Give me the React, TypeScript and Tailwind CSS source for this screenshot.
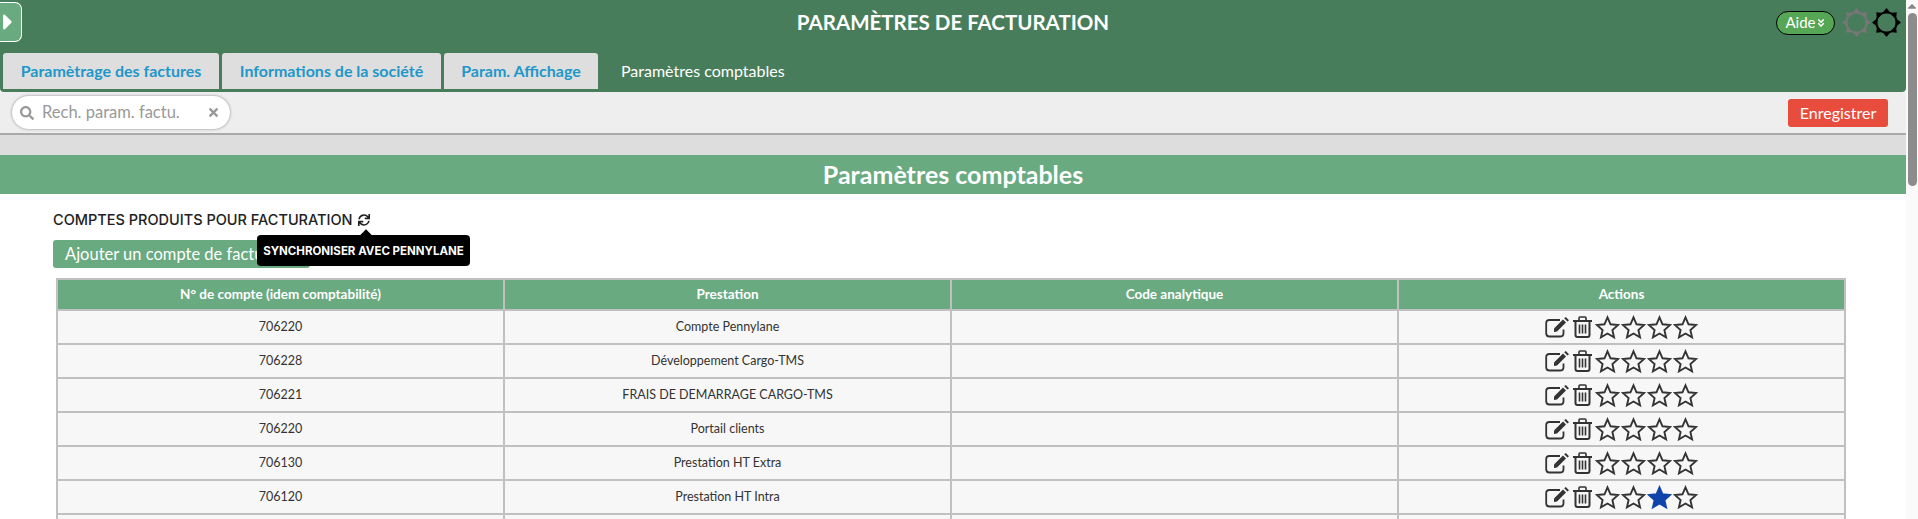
import { FaSearch, FaTimes, FaSync, FaAngleDoubleDown, FaCaretRight, FaCaretUp } from 'react-icons/fa';

const FONT = 'Lato, "Open Sans", sans-serif';

const rows = [
  { account: '706220', label: 'Compte Pennylane', star: -1 },
  { account: '706228', label: 'Développement Cargo-TMS', star: -1 },
  { account: '706221', label: 'FRAIS DE DEMARRAGE CARGO-TMS', star: -1 },
  { account: '706220', label: 'Portail clients', star: -1 },
  { account: '706130', label: 'Prestation HT Extra', star: -1 },
  { account: '706120', label: 'Prestation HT Intra', star: 2 },
  { account: '', label: '', star: -1 },
];

const STAR = 'M12 2.2 L14.9 8.9 L22.2 9.6 L16.7 14.4 L18.3 21.5 L12 17.8 L5.7 21.5 L7.3 14.4 L1.8 9.6 L9.1 8.9 Z';

function Gear({ className }: { className: string }) {
  const teeth = [0, 45, 90, 135, 180, 225, 270, 315];
  return (
    <svg viewBox="0 0 30 30" className={className} fill="currentColor">
      {teeth.map((a) => (
        <path key={a} d="M10.5 5.5 L15 0 L19.5 5.5 Z" transform={`rotate(${a} 15 15)`} />
      ))}
      <circle cx="15" cy="15" r="10.5" fill="none" stroke="currentColor" strokeWidth="2" />
    </svg>
  );
}

function EditIcon() {
  return (
    <svg viewBox="0 0 25 22" className="w-[25px] h-[22px] text-[#333333]" fill="none" stroke="currentColor">
      <path d="M15 4 H4.5 Q1.2 4 1.2 7.3 V17.2 Q1.2 20.5 4.5 20.5 H15 Q18.5 20.5 18.5 17.2 V13.5" strokeWidth="1.8" />
      <path d="M9 12.5 L18 3.5 L21 6.5 L12 15.5 L9 16 Z" fill="currentColor" stroke="none" />
      <path d="M19.2 2.3 L20.8 1 L24 4.2 L22.4 5.6 Z" fill="currentColor" stroke="none" />
    </svg>
  );
}

function TrashIcon() {
  return (
    <svg viewBox="0 0 19 22" className="w-[19px] h-[22px] text-[#333333]" fill="none" stroke="currentColor" strokeWidth="2">
      <path d="M0 5 H19" />
      <path d="M6 5 V2 Q6 1 7 1 H12 Q13 1 13 2 V5" strokeWidth="1.6" />
      <path d="M2.5 5 V19 Q2.5 21 4.5 21 H14.5 Q16.5 21 16.5 19 V5" />
      <path d="M6.5 8.5 V17.5 M9.5 8.5 V17.5 M12.5 8.5 V17.5" strokeWidth="1.6" />
    </svg>
  );
}

function Tab({ label, width }: { label: string; width: string }) {
  return (
    <div className={`${width} h-[36px] flex items-center justify-center bg-[#dedede] rounded-t-[3px] text-[#1f97c9] text-[16px] font-bold whitespace-nowrap`}>
      {label}
    </div>
  );
}

export default function App() {
  return (
    <div className="h-[519px] overflow-hidden flex bg-white" style={{ fontFamily: FONT }}>
      <div className="w-[1906px] shrink-0 flex flex-col">
        <header className="relative h-[92px] shrink-0 bg-[#487d5c] rounded-b-[4px] flex flex-col justify-end pb-[3px] pl-[3px]">
          <div className="absolute left-0 top-[2px] w-[22px] h-[40px] bg-[#69aa80] border border-white border-l-0 rounded-r-[7px] flex items-center">
            <FaCaretRight size={26} className="text-white -ml-[5px]" />
          </div>
          <h1 className="absolute left-0 right-0 top-[9px] text-center text-white text-[20.5px] font-bold leading-[26px]">
            PARAMÈTRES DE FACTURATION
          </h1>
          <div className="absolute right-[5px] top-[8px] flex items-center gap-[1px]">
            <div className="h-[24px] w-[59px] mr-[6px] rounded-full bg-[#55a755] border border-black text-white text-[15px] flex items-center justify-center">
              Aide
              <FaAngleDoubleDown size={10} />
            </div>
            <Gear className="w-[29px] h-[29px] text-[#777777]" />
            <Gear className="w-[29px] h-[29px] text-black" />
          </div>
          <nav className="flex gap-[3px]">
            <Tab label="Paramètrage des factures" width="w-[216px]" />
            <Tab label="Informations de la société" width="w-[219px]" />
            <Tab label="Param. Affichage" width="w-[154px]" />
            <div className="h-[36px] px-[20px] flex items-center text-white text-[16px] whitespace-nowrap">
              Paramètres comptables
            </div>
          </nav>
        </header>

        <div className="h-[43px] shrink-0 bg-[#eeeeee] border-b-2 border-[#aaaaaa] flex items-center justify-between pl-[12px] pr-[18px]">
          <div className="w-[218px] h-[33px] bg-white rounded-full shadow-[0_0_3px_#888888] flex items-center pl-[8px] pr-[10px] text-[#999999]">
            <FaSearch size={14} />
            <span className="ml-[8px] text-[16.5px] flex-1">Rech. param. factu.</span>
            <FaTimes size={13} />
          </div>
          <button className="w-[100px] h-[28px] bg-[#e74c3c] rounded-[3px] text-white text-[16px]">Enregistrer</button>
        </div>

        <div className="h-[20px] shrink-0 bg-[#dddddd]" />

        <div className="h-[39px] shrink-0 bg-[#69aa80] text-white text-[25px] font-bold flex items-center justify-center">
          Paramètres comptables
        </div>

        <main className="pl-[53px] pr-[60px]">
          <div className="relative mt-[16px] flex items-center text-[14.5px] font-medium text-[#222222] leading-[20px]" style={{ fontFamily: 'Inter, sans-serif' }}>
            COMPTES PRODUITS POUR FACTURATION
            <FaSync size={12} className="ml-[5px]" />
            <div className="absolute left-[204px] top-[25px] w-[213px] h-[31px] bg-black rounded-[4px] text-white text-[11.5px] font-bold flex items-center justify-center whitespace-nowrap z-10">
              SYNCHRONISER AVEC PENNYLANE
              <div className="absolute left-[105px] -top-[4px] w-[8px] h-[8px] bg-black rotate-45" />
            </div>
          </div>
          <button className="mt-[10px] w-[257px] h-[28px] bg-[#69aa80] rounded-[3px] text-white text-[16.5px] text-left pl-[12px] whitespace-nowrap">
            Ajouter un compte de facturation
          </button>
          <table className="ml-[3px] mt-[10px] w-[1790px] table-fixed border-collapse text-[12.5px] text-[#333333]">
            <thead>
              <tr className="h-[31px] bg-[#69aa80] text-white text-[13.5px]">
                <th className="border-2 border-[#c0c0c0] font-bold">N° de compte (idem comptabilité)</th>
                <th className="border-2 border-[#c0c0c0] font-bold">Prestation</th>
                <th className="border-2 border-[#c0c0c0] font-bold">Code analytique</th>
                <th className="border-2 border-[#c0c0c0] font-bold">Actions</th>
              </tr>
            </thead>
            <tbody>
              {rows.map((row, i) => (
                <tr key={i} className="h-[34px] bg-[#f7f7f7] text-center">
                  <td className="border-2 border-[#c0c0c0]">{row.account}</td>
                  <td className="border-2 border-[#c0c0c0]">{row.label}</td>
                  <td className="border-2 border-[#c0c0c0]"></td>
                  <td className="border-2 border-[#c0c0c0]">
                    {row.label && (
                      <div className="flex items-center justify-center gap-[3px]">
                        <EditIcon />
                        <TrashIcon />
                        <div className="flex gap-[1px]">
                          {[0, 1, 2, 3].map((s) => (
                            <svg key={s} viewBox="0 0 24 24" className="w-[25px] h-[25px] text-[#333333]">
                              {s === row.star ? (
                                <path d={STAR} fill="#0f44aa" stroke="#0f44aa" strokeWidth="1.8" />
                              ) : (
                                <path d={STAR} fill="none" stroke="currentColor" strokeWidth="1.8" />
                              )}
                            </svg>
                          ))}
                        </div>
                      </div>
                    )}
                  </td>
                </tr>
              ))}
            </tbody>
          </table>
        </main>
      </div>

      <aside className="w-[12px] shrink-0 bg-[#fafafa] flex flex-col items-center">
        <FaCaretUp size={14} className="text-[#888888] -mt-[1px]" />
        <div className="w-[9px] h-[173px] bg-[#8c8c8c] rounded-full" />
      </aside>
    </div>
  );
}
